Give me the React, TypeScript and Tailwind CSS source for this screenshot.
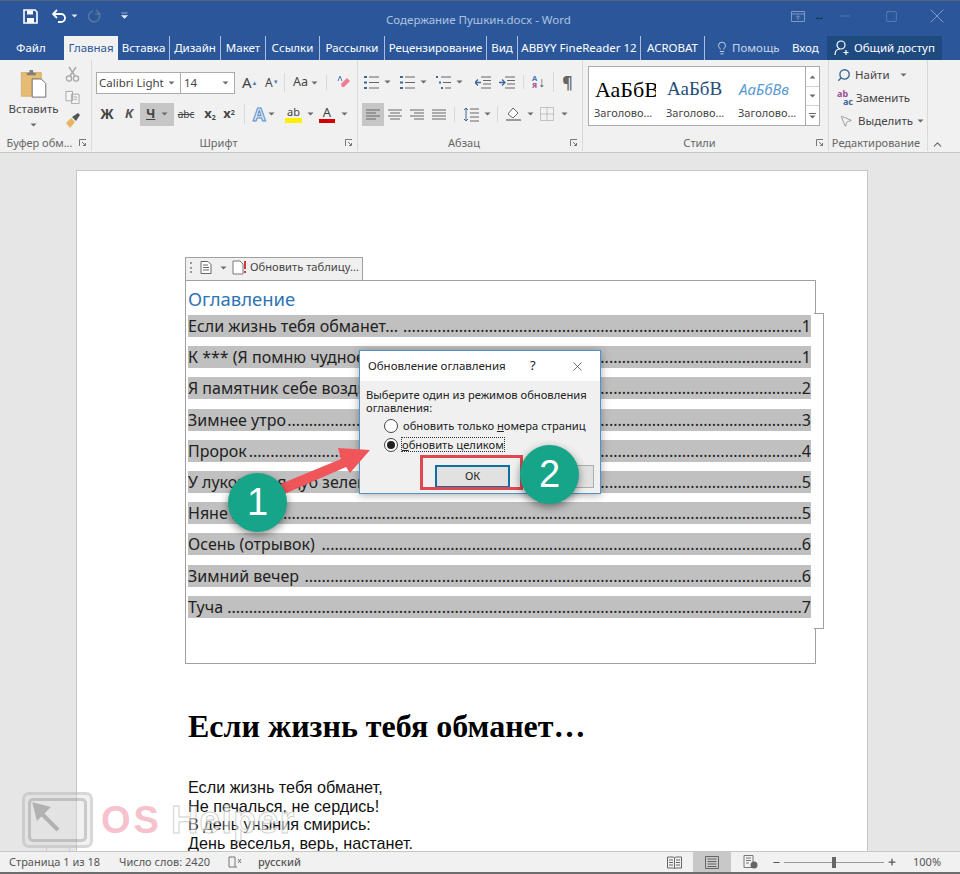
import { ChevronUp, Lightbulb, Minus, Plus, Search, Square, X, MousePointer2 } from "lucide-react"

const tabs = [
  { label: "Вставка", width: "w-[52px]" },
  { label: "Дизайн", width: "w-[51px]" },
  { label: "Макет", width: "w-[45px]" },
  { label: "Ссылки", width: "w-[54px]" },
  { label: "Рассылки", width: "w-[65px]" },
  { label: "Рецензирование", width: "w-[102px]" },
  { label: "Вид", width: "w-[31px]" },
  { label: "ABBYY FineReader 12", width: "w-[123px]" },
  { label: "ACROBAT", width: "w-[64px]" },
]

const tocRows = [
  { title: "Если жизнь тебя обманет...", page: 1, leader: 93 },
  { title: "К *** (Я помню чудное мгновенье)", page: 1, leader: 82 },
  { title: "Я памятник себе воздвиг нерукотворный", page: 2, leader: 65 },
  { title: "Зимнее утро", page: 3, leader: 120 },
  { title: "Пророк", page: 4, leader: 129 },
  { title: "У лукоморья дуб зеленый", page: 5, leader: 101 },
  { title: "Няне", page: 5, leader: 133 },
  { title: "Осень (отрывок)", page: 6, leader: 112 },
  { title: "Зимний вечер", page: 6, leader: 116 },
  { title: "Туча", page: 7, leader: 134 },
]

const poem = ["Если жизнь тебя обманет,", "Не печалься, не сердись!", "В день уныния смирись:", "День веселья, верь, настанет."]

function Caret({ className = "" }: { className?: string }) {
  return (
    <svg width="7" height="4" viewBox="0 0 7 4" className={`shrink-0 ${className}`}>
      <path d="M0.5 0.5h6L3.5 3.5z" fill="#6a6a6a" />
    </svg>
  )
}

function Launcher() {
  return (
    <svg width="8" height="8" viewBox="0 0 8 8" className="shrink-0">
      <path d="M0.5 7V0.5H7M3 3l3.5 3.5M6.5 4v2.5H4" fill="none" stroke="#777" strokeWidth="1" />
    </svg>
  )
}

function Group({ label, width, launcher, children }: { label: string; width: string; launcher?: boolean; children: React.ReactNode }) {
  return (
    <div className={`${width} h-full flex flex-col border-r border-[#d9d9d9] shrink-0`}>
      <div className="flex-1 min-h-0">{children}</div>
      <div className="h-[16px] flex items-center pr-[4px] text-[11px] text-[#666]">
        <span className="flex-1 text-center truncate">{label}</span>
        {launcher && <Launcher />}
      </div>
    </div>
  )
}

function ParaLines({ kind }: { kind: "left" | "center" | "right" | "full" }) {
  const rows: Record<string, string> = {
    left: "M1 2h14M1 5h10M1 8h14M1 11h10",
    center: "M1 2h14M3 5h10M1 8h14M3 11h10",
    right: "M1 2h14M5 5h10M1 8h14M5 11h10",
    full: "M1 2h14M1 5h14M1 8h14M1 11h14",
  }
  return (
    <svg width="16" height="13" viewBox="0 0 16 13">
      <path d={rows[kind]} stroke="#666" strokeWidth="1" fill="none" />
    </svg>
  )
}

function ClipboardGroup() {
  return (
    <Group label="Буфер обм..." width="w-[92px]" launcher>
      <div className="flex">
        <div className="w-[65px] pl-[2px] pt-[9px] flex flex-col items-center">
          <svg width="30" height="29" viewBox="0 0 30 32">
            <rect x="1" y="4" width="22" height="26" fill="#e6bc74" stroke="#d6ad68" />
            <path d="M7 7V4h3V1h4v3h3v3z" fill="#7f7f7f" />
            <path d="M13 11h10l5 5v15H13z" fill="#fff" stroke="#666" />
          </svg>
          <span className="text-[11.500px] text-[#444] mt-[3px] leading-[16px]">Вставить</span>
          <Caret className="mt-[6px]" />
        </div>
        <div className="flex flex-col gap-[8px] pt-[6px]">
          <svg width="15" height="16" viewBox="0 0 15 16">
            <path d="M4 1l6 9M11 1L5 10" stroke="#a8a8a8" strokeWidth="1.400" />
            <circle cx="4" cy="12.500" r="2.600" fill="none" stroke="#a8a8a8" strokeWidth="1.300" />
            <circle cx="11" cy="12.500" r="2.600" fill="none" stroke="#a8a8a8" strokeWidth="1.300" />
          </svg>
          <svg width="15" height="14" viewBox="0 0 16 14">
            <path d="M1 1h7v10H1zM7 4h8v10H7zM9 7h4M9 9.500h4" fill="#f4f4f4" stroke="#a8a8a8" />
          </svg>
          <svg width="16" height="16" viewBox="0 0 16 16">
            <path d="M1 11l5-5 4 4-5 6z" fill="#e8b45f" />
            <path d="M7 5l6-4 2 2-4 6z" fill="#555" />
          </svg>
        </div>
      </div>
    </Group>
  )
}

function FontGroup() {
  return (
    <Group label="Шрифт" width="w-[266px]" launcher>
      <div className="pt-[11px] pl-[4px]">
        <div className="flex items-center h-[23px] text-[#444]">
          <div className="w-[139px] h-[22px] shrink-0 flex bg-white border border-[#ababab]">
            <div className="w-[84px] flex items-center justify-between pl-[2px] pr-[5px] border-r border-[#ababab] text-[11.500px]">
              Calibri Light <Caret />
            </div>
            <div className="flex-1 flex items-center justify-between pl-[3px] pr-[5px] text-[11.500px]">
              14 <Caret />
            </div>
          </div>
          <span className="ml-[7px] w-[23px] shrink-0 text-[15px]">A<sup className="text-[6px] text-[#4a7ab5]">▲</sup></span>
          <span className="w-[19px] shrink-0 text-[12px]">A<sup className="text-[6px] text-[#4a7ab5]">▼</sup></span>
          <span className="pl-[8px] border-l border-[#d9d9d9] w-[42px] shrink-0 flex items-center gap-[3px] text-[12.500px]">Aa <Caret /></span>
          <span className="border-l border-[#d9d9d9] pl-[9px]">
            <svg width="15" height="15" viewBox="0 0 15 15">
              <path d="M5 9l6-6 3 3-6 6H6z" fill="#ef7d8f" />
              <path d="M2 6l2-5 2 5" fill="none" stroke="#4a7ab5" />
            </svg>
          </span>
        </div>
        <div className="flex items-center h-[24px] mt-[8px] text-[#444]">
          <span className="w-[22px] shrink-0 text-center text-[13.500px] font-bold">Ж</span>
          <span className="w-[22px] shrink-0 text-center text-[13px] font-bold italic text-[#555]">К</span>
          <span className="w-[34px] shrink-0 h-[23px] bg-[#c6c6c6] flex items-center justify-between px-[6px] text-[13px] font-bold underline">Ч <Caret /></span>
          <span className="w-[24px] shrink-0 text-center text-[10px] line-through">abc</span>
          <span className="w-[24px] shrink-0 text-center text-[13px] font-bold">x<sub className="text-[7px]">2</sub></span>
          <span className="w-[14px] shrink-0 text-center text-[13px] font-bold">x<sup className="text-[7px]">2</sup></span>
          <span className="ml-[8px] pl-[8px] border-l border-[#d9d9d9] w-[41px] shrink-0 flex items-center gap-[3px]">
            <span className="text-[18px] leading-[20px] font-bold text-[#dce9f7] [-webkit-text-stroke:1px_#5b8fc9]">A</span>
            <Caret />
          </span>
          <span className="w-[34px] shrink-0 flex items-center gap-[5px]">
            <span className="w-[17px] flex flex-col items-center leading-[12px] text-[11px]">
              ab
              <span className="w-[17px] h-[5px] bg-[#fff200]" />
            </span>
            <Caret />
          </span>
          <span className="w-[30px] shrink-0 flex items-center gap-[6px]">
            <span className="w-[16px] flex flex-col items-center leading-[13px] text-[13px]">
              A
              <span className="w-[16px] h-[4px] bg-[#d40000]" />
            </span>
            <Caret />
          </span>
        </div>
      </div>
    </Group>
  )
}

function ParagraphGroup() {
  return (
    <Group label="Абзац" width="w-[225px]" launcher>
      <div className="pt-[12px] pl-[6px]">
        <div className="flex items-center h-[20px] gap-[5px]">
          <svg width="15" height="15" viewBox="0 0 15 15">
            <path d="M5 2h10M5 7.500h10M5 13h10" stroke="#666" />
            <path d="M0 1h3v2H0zM0 6.500h3v2H0zM0 12h3v2H0z" fill="#3f6797" />
          </svg>
          <Caret />
          <svg className="ml-[4px]" width="15" height="15" viewBox="0 0 15 15">
            <path d="M5 2h10M5 7.500h10M5 13h10" stroke="#666" />
            <path d="M0 1h3v2H0zM0 6.500h3v2H0zM0 12h3v2H0z" fill="#3f6797" />
          </svg>
          <Caret />
          <svg className="ml-[4px]" width="15" height="15" viewBox="0 0 15 15">
            <path d="M5 2h10M7 7.500h8M9 13h6" stroke="#666" />
            <path d="M0 1h2v2H0zM3 6.500h2v2H3zM5 12h2v2H5z" fill="#3f6797" />
          </svg>
          <Caret />
          <svg className="ml-[7px]" width="16" height="13" viewBox="0 0 16 13">
            <path d="M6 1h10M8 4.500h8M8 8h8M6 12h10" stroke="#666" />
            <path d="M6 6.500H0M3 3.500L0 6.500l3 3" fill="none" stroke="#3f6797" strokeWidth="1.300" />
          </svg>
          <svg className="ml-[3px]" width="16" height="13" viewBox="0 0 16 13">
            <path d="M6 1h10M8 4.500h8M8 8h8M6 12h10" stroke="#666" />
            <path d="M0 6.500h6M3 3.500l3 3-3 3" fill="none" stroke="#3f6797" strokeWidth="1.300" />
          </svg>
          <span className="ml-[3px] pl-[8px] border-l border-[#d9d9d9] flex items-center gap-[1px]">
            <span className="flex flex-col text-[7.500px] leading-[7px] font-bold">
              <span className="text-[#4a7ab5]">A</span>
              <span className="text-[#9a4c95]">Я</span>
            </span>
            <span className="text-[14px] leading-[14px] text-[#555]">↓</span>
          </span>
          <span className="ml-[3px] pl-[8px] border-l border-[#d9d9d9] text-[16px] leading-[20px] font-bold text-[#666]">¶</span>
        </div>
        <div className="flex items-center h-[24px] mt-[10px] -ml-[2px]">
          <span className="w-[22px] h-[23px] shrink-0 bg-[#c6c6c6] flex items-center justify-center"><ParaLines kind="left" /></span>
          <span className="w-[22px] shrink-0 flex justify-center"><ParaLines kind="center" /></span>
          <span className="w-[22px] shrink-0 flex justify-center"><ParaLines kind="right" /></span>
          <span className="w-[22px] shrink-0 flex justify-center"><ParaLines kind="full" /></span>
          <span className="ml-[4px] pl-[8px] border-l border-[#d9d9d9] w-[43px] shrink-0 flex items-center gap-[5px]">
            <svg width="16" height="15" viewBox="0 0 16 15">
              <path d="M7 2h9M7 6h9M7 10h9M7 14h9" stroke="#666" />
              <path d="M3 1v13M1 3l2-2 2 2M1 12l2 2 2-2" fill="none" stroke="#3f6797" />
            </svg>
            <Caret />
          </span>
          <span className="pl-[7px] border-l border-[#d9d9d9] flex items-center gap-[5px]">
            <svg width="17" height="16" viewBox="0 0 17 16">
              <path d="M3 8l5-6 5 5-5 5z" fill="#fff" stroke="#666" />
              <path d="M1 14h15" stroke="#999" strokeWidth="2" />
            </svg>
            <Caret />
          </span>
          <span className="ml-[6px] flex items-center gap-[7px]">
            <svg width="14" height="14" viewBox="0 0 14 14">
              <path d="M0.500 0.500h13v13h-13zM7 0.500v13M0.500 7h13" fill="none" stroke="#999" strokeDasharray="1 1" />
            </svg>
            <Caret />
          </span>
        </div>
      </div>
    </Group>
  )
}

function StyleCard({ sample, className }: { sample: string; className: string }) {
  return (
    <div className="w-[72px] shrink-0 flex flex-col">
      <div className="w-[67px] h-[30px] pl-[6px] overflow-hidden">
        <div className={`h-[30px] flex items-center whitespace-nowrap ${className}`}>{sample}</div>
      </div>
      <div className="text-[11px] leading-[16px] text-[#444] pl-[5px] mt-[1px] whitespace-nowrap">Заголово...</div>
    </div>
  )
}

function StylesGroup() {
  return (
    <Group label="Стили" width="w-[246px]" launcher>
      <div className="pt-[6px] pl-[5px]">
        <div className="w-[232px] h-[60px] bg-white border border-[#ababab] flex">
          <div className="flex-1 flex pt-[7px]">
            <StyleCard sample="АаБбВ" className="font-['Liberation_Serif',serif] text-[22px] text-black" />
            <StyleCard sample="АаБбВ" className="font-['Liberation_Serif',serif] text-[19px] text-[#1f4e79]" />
            <StyleCard sample="АаБбВв" className="text-[15px] italic text-[#5b9bd5]" />
          </div>
          <div className="w-[14px] border-l border-[#ababab] flex flex-col">
            <div className="h-[20px] border-b border-[#d0d0d0] flex items-center justify-center"><Caret className="rotate-180" /></div>
            <div className="h-[19px] border-b border-[#d0d0d0] flex items-center justify-center"><Caret /></div>
            <div className="flex-1 flex flex-col items-center justify-center gap-[1px]">
              <span className="w-[7px] h-px bg-[#6a6a6a]" />
              <Caret />
            </div>
          </div>
        </div>
      </div>
    </Group>
  )
}

function EditGroup() {
  return (
    <Group label="Редактирование" width="w-[99px]">
      <div className="pt-[3px] pl-[8px] text-[11.500px] text-[#444] flex flex-col">
        <div className="h-[23px] flex items-center gap-[4px]">
          <Search size={14} className="text-[#3f6797] -scale-x-100" strokeWidth={2.400} />
          Найти <Caret className="ml-[6px]" />
        </div>
        <div className="h-[23px] flex items-center gap-[3px]">
          <span className="w-[16px] text-[9px] leading-[8px] font-bold flex flex-col">
            <span className="text-[#9a4c95]">ab</span>
            <span className="text-[#3f6797] text-right">ac</span>
          </span>
          Заменить
        </div>
        <div className="h-[23px] flex items-center gap-[4px]">
          <MousePointer2 size={14} className="text-[#666] ml-[2px] mr-[1px]" strokeWidth={1} />
          Выделить <Caret />
        </div>
      </div>
    </Group>
  )
}

function TocRow({ title, page, leader }: { title: string; page: number; leader: number }) {
  return (
    <div className="h-[22px] mb-[9.200px] bg-[#c0c0c0] flex items-center text-[16px] text-[#222] whitespace-nowrap">
      <span className="shrink-0">{title}</span>
      <span className="flex-1 min-w-0 flex justify-end">{".".repeat(leader)}</span>
      <span className="shrink-0">{page}</span>
    </div>
  )
}

function Page() {
  return (
    <div className="ml-[76px] w-[792px] bg-white border border-[#c6c6c6] border-b-0 pt-[86px] pl-[108px] h-full shrink-0">
      <div className="w-[178px] h-[23px] bg-[#f0f0f0] border border-[#a0a0a0] border-b-0 pb-[3px] flex items-center text-[11.200px] text-[#444]">
        <span className="ml-[4px] w-[3px] h-[11px] border-l-2 border-dotted border-[#999]" />
        <svg className="ml-[7px]" width="12" height="13" viewBox="0 0 12 13">
          <path d="M1 0.500h7l3 3v9H1zM3 4h5M3 6.500h6M3 9h6" fill="#fff" stroke="#666" />
        </svg>
        <Caret className="ml-[8px]" />
        <svg className="ml-[5px]" width="15" height="15" viewBox="0 0 15 15">
          <path d="M1 1h7l3 3v10H1z" fill="#fff" stroke="#777" />
          <path d="M13 1v8M13 11v2" stroke="#d23b2f" strokeWidth="2" />
        </svg>
        <span className="ml-[3px] whitespace-nowrap">Обновить таблицу...</span>
      </div>
      <div className="relative w-[631px] h-[384px] border border-[#a0a0a0] pl-[2px] pr-[4px] pt-[5px]">
        <div className="h-[29px] text-[18.500px] leading-[26px] text-[#2e74b5]">Оглавление</div>
        {tocRows.map((row) => (
          <TocRow key={row.title} title={row.title} page={row.page} leader={row.leader} />
        ))}
        <div className="absolute -right-[9px] top-[32px] w-[10px] h-[316px] bg-white border border-l-0 border-[#a0a0a0]" />
      </div>
      <h1 className="mt-[44px] pl-[3px] font-['Liberation_Serif',serif] font-bold text-[32px] leading-[36px] text-black whitespace-nowrap">
        Если жизнь тебя обманет…
      </h1>
      <div className="mt-[34px] pl-[3px] font-['Liberation_Sans',sans-serif] text-[16.200px] leading-[18.700px] text-[#111]">
        {poem.map((line) => (
          <div key={line}>{line}</div>
        ))}
      </div>
    </div>
  )
}

function Dialog() {
  return (
    <div className="absolute left-[359px] top-[350px] w-[242px] h-[144px] bg-[#f0f0f0] border border-[#4f94c9] shadow-[0_1px_8px_rgba(0,0,0,0.35)] text-[#222]">
      <div className="h-[30px] bg-white flex items-center pl-[8px] text-[11.500px]">
        <span className="w-[162px] whitespace-nowrap">Обновление оглавления</span>
        <span className="w-[40px] text-[13px]">?</span>
        <X size={15} strokeWidth={1} />
      </div>
      <div className="pl-[6px] pt-[7px] text-[11.200px] leading-[13px]">
        <div className="whitespace-nowrap">Выберите один из режимов обновления</div>
        <div>оглавления:</div>
        <div className="mt-[2px] ml-[18px] h-[19px] flex items-center gap-[5px] whitespace-nowrap">
          <span className="w-[14px] h-[14px] shrink-0 rounded-full border border-[#444] bg-white" />
          <span>обновить только <span className="underline">н</span>омера страниц</span>
        </div>
        <div className="ml-[18px] h-[19px] flex items-center gap-[4px] whitespace-nowrap">
          <span className="w-[14px] h-[14px] shrink-0 rounded-full border border-[#444] bg-white flex items-center justify-center">
            <span className="w-[8px] h-[8px] rounded-full bg-[#222]" />
          </span>
          <span className="outline-1 outline-dotted outline-[#333]"><span className="underline">о</span>бновить целиком</span>
        </div>
      </div>
      <div className="ml-[75px] mt-[11px] flex gap-[10px]">
        <div className="w-[75px] h-[23px] bg-[#e1e1e1] border-2 border-[#0f6fa3] flex items-center justify-center text-[11px]">ОК</div>
        <div className="w-[74px] h-[23px] bg-[#e1e1e1] border border-[#adadad]" />
      </div>
    </div>
  )
}

function NumberBadge({ value, className }: { value: number; className: string }) {
  return (
    <div className={`absolute w-[59px] h-[59px] rounded-full bg-[#17a589] shadow-[0_3px_8px_rgba(0,0,0,0.45)] flex items-center justify-center text-white text-[38px] font-['Liberation_Sans',sans-serif] ${className}`}>
      {value}
    </div>
  )
}

function Watermark() {
  return (
    <div className="absolute left-[22px] top-[792px] flex items-start opacity-60 pointer-events-none">
      <div className="flex flex-col items-center">
        <div className="w-[71px] h-[56px] rounded-[7px] border-[3px] border-[#bdbdbd] bg-[#e0e0e0]/70 p-[3px]">
          <div className="w-full h-full rounded-[5px] border-[3px] border-[#a8a8a8] relative">
            <svg width="32" height="32" viewBox="0 0 32 32" className="absolute left-[1px] top-[1px]">
              <path d="M26 28L8 10M3 3l12 3-9 9z" fill="#8f8f8f" stroke="#8f8f8f" strokeWidth="4" />
            </svg>
          </div>
        </div>
        <div className="w-[24px] h-[4px] border border-t-0 border-[#bdbdbd]" />
      </div>
      <span className="ml-[8px] mt-[8px] text-[38px] leading-[40px] font-bold tracking-[3px] text-[#f09aae] font-['Liberation_Sans',sans-serif]">OS</span>
      <span className="ml-[9px] mt-[8px] text-[38px] leading-[40px] font-bold tracking-[1px] text-white [-webkit-text-stroke:1px_#b5b5b5] font-['Liberation_Sans',sans-serif]">Helper</span>
    </div>
  )
}

function StatusBar() {
  return (
    <div className="relative z-10 h-[23px] shrink-0 bg-[#f1f1f1] border-t border-[#c6c6c6] border-b-2 border-b-[#6d6d6d] flex items-center text-[11px] text-[#555]">
      <span className="ml-[9px] w-[110px]">Страница 1 из 18</span>
      <span className="w-[109px]">Число слов: 2420</span>
      <svg width="14" height="13" viewBox="0 0 14 13">
        <path d="M7 1H1v10h6V1M7 11h2M10 3l3 4M13 3l-3 4" fill="none" stroke="#777" />
      </svg>
      <span className="ml-[16px] font-medium">русский</span>
      <div className="ml-auto flex items-center h-full">
        <svg width="15" height="13" viewBox="0 0 15 13">
          <path d="M0.500 1h6l1 1 1-1h6v11h-6l-1 1-1-1h-6zM7.500 2v10M2 4h4M2 6.500h4M2 9h4M9 4h4M9 6.500h4M9 9h4" fill="none" stroke="#666" />
        </svg>
        <span className="ml-[11px] w-[38px] h-full bg-[#c8c8c8] flex items-center justify-center">
          <svg width="14" height="13" viewBox="0 0 14 13">
            <path d="M0.500 0.500h13v12h-13zM2.500 3h9M2.500 5.500h9M2.500 8h9M2.500 10.500h9" fill="none" stroke="#666" />
          </svg>
        </span>
        <svg className="ml-[12px]" width="15" height="14" viewBox="0 0 15 14">
          <path d="M1 0.500h9v12H1zM3 3h5M3 5.500h5M3 8h3" fill="none" stroke="#777" />
          <circle cx="11" cy="10" r="3.500" fill="#666" />
        </svg>
        <Minus size={9} className="ml-[14px]" strokeWidth={3} />
        <div className="w-[100px] mx-[3px] h-px bg-[#999] flex justify-center items-center">
          <span className="w-[4px] h-[11px] bg-[#666]" />
        </div>
        <Plus size={10} strokeWidth={3} />
        <span className="ml-[16px] mr-[20px] w-[27px]">100%</span>
      </div>
    </div>
  )
}

export default function App() {
  return (
    <div className="relative w-[960px] h-[874px] overflow-hidden flex flex-col bg-[#e6e6e6] font-['Noto_Sans',sans-serif]">
      <div className="h-[36px] shrink-0 bg-[#2b579a] border-t border-[#50647f] flex items-start text-white">
        <div className="h-[30px] w-[386px] shrink-0 flex items-center">
          <svg className="ml-[23px]" width="15" height="15" viewBox="0 0 15 15">
            <path d="M1 1h11l2 2v11H1z" fill="none" stroke="#fff" strokeWidth="1.600" />
            <path d="M4 1.500h6v4H4zM4 9h7v5H4z" fill="#fff" />
          </svg>
          <svg className="ml-[14px]" width="15" height="14" viewBox="0 0 15 14">
            <path d="M5 1L1 5l4 4M1 5h8a4 4 0 0 1 0 8H6" fill="none" stroke="#fff" strokeWidth="1.800" />
          </svg>
          <svg className="ml-[4px]" width="7" height="4" viewBox="0 0 7 4"><path d="M0.500 0.500h6L3.500 3.500z" fill="#dfe7f3" /></svg>
          <svg className="ml-[9px]" width="14" height="14" viewBox="0 0 14 14">
            <path d="M9 1l4 4H8M12 5A5.500 5.500 0 1 1 6 2" fill="none" stroke="#54759f" strokeWidth="1.600" />
          </svg>
          <svg className="ml-[20px]" width="7" height="8" viewBox="0 0 7 8"><path d="M0.500 1h6M0.500 3.500h6l-3 3z" fill="#dfe7f3" stroke="#dfe7f3" strokeWidth="0.600" /></svg>
        </div>
        <span className="w-[187px] shrink-0 h-[36px] leading-[38px] text-[11.500px] text-[#aec3e0] whitespace-nowrap">Содержание Пушкин.docx - Word</span>
        <div className="h-[30px] flex items-center">
          <svg className="ml-[218px]" width="14" height="11" viewBox="0 0 14 11">
            <path d="M0.500 0.500h13v10h-13zM0.500 3h13M7 9V5M5 6.500L7 4.500l2 2" fill="none" stroke="#7d9ac4" />
          </svg>
          <span className="ml-[9px] w-[10px] text-[11px] text-[#10233f] font-bold">↔</span>
          <Minus size={14} className="ml-[14px] text-[#6f8fbc]" strokeWidth={1} />
          <Square size={13} className="ml-[33px] text-[#7d9ac4]" strokeWidth={1} />
          <X size={24} className="ml-[27px] text-[#7d9ac4]" strokeWidth={1} />
        </div>
      </div>

      <div className="h-[24px] shrink-0 bg-[#2b579a] flex items-stretch text-[11.500px] text-white">
        <span className="w-[64px] pl-[16px] flex items-center">Файл</span>
        <span className="w-[54px] bg-[#f1f1f1] text-[#2b579a] flex items-center justify-center">Главная</span>
        {tabs.map((tab) => (
          <span key={tab.label} className={`${tab.width} flex items-center justify-center border-r border-[#a9bfdd] whitespace-nowrap`}>{tab.label}</span>
        ))}
        <Lightbulb size={14} strokeWidth={1.200} className="ml-[10px] self-center" />
        <span className="ml-[3px] w-[47px] whitespace-nowrap flex items-center text-[#c7d5ea]">Помощь</span>
        <span className="ml-[13px] w-[25px] flex items-center">Вход</span>
        <span className="ml-[10px] w-[115px] bg-[#1e4a80] flex items-center pl-[7px] gap-[4px] whitespace-nowrap">
          <svg width="16" height="16" viewBox="0 0 16 16">
            <circle cx="7" cy="5" r="4" fill="none" stroke="#fff" strokeWidth="1.200" />
            <path d="M1 15c0-4 2-6 5-6M12 10v5M9.500 12.500h5" fill="none" stroke="#fff" strokeWidth="1.200" />
          </svg>
          Общий доступ
        </span>
      </div>

      <div className="h-[93px] shrink-0 bg-[#f1f1f1] border-b border-[#c6c6c6] flex items-stretch pb-[1px]">
        <ClipboardGroup />
        <FontGroup />
        <ParagraphGroup />
        <StylesGroup />
        <EditGroup />
        <div className="flex-1 flex items-end justify-end pr-[16px]">
          <ChevronUp size={13} className="text-[#666]" strokeWidth={2} />
        </div>
      </div>

      <div className="flex-1 min-h-0 overflow-hidden pt-[17px]">
        <Page />
      </div>

      <StatusBar />

      <Dialog />
      <svg className="absolute left-[275px] top-[440px]" width="100" height="60" viewBox="0 0 100 60">
        <path d="M3 45L66 19 63 8l32 2L75 33l-4-6L7 55z" fill="#f0555a" />
      </svg>
      <div className="absolute left-[420px] top-[455px] w-[103px] h-[35px] border-[3px] border-[#e0484f]" />
      <NumberBadge value={1} className="left-[228px] top-[473px]" />
      <NumberBadge value={2} className="left-[520px] top-[445px]" />
      <Watermark />
    </div>
  )
}
